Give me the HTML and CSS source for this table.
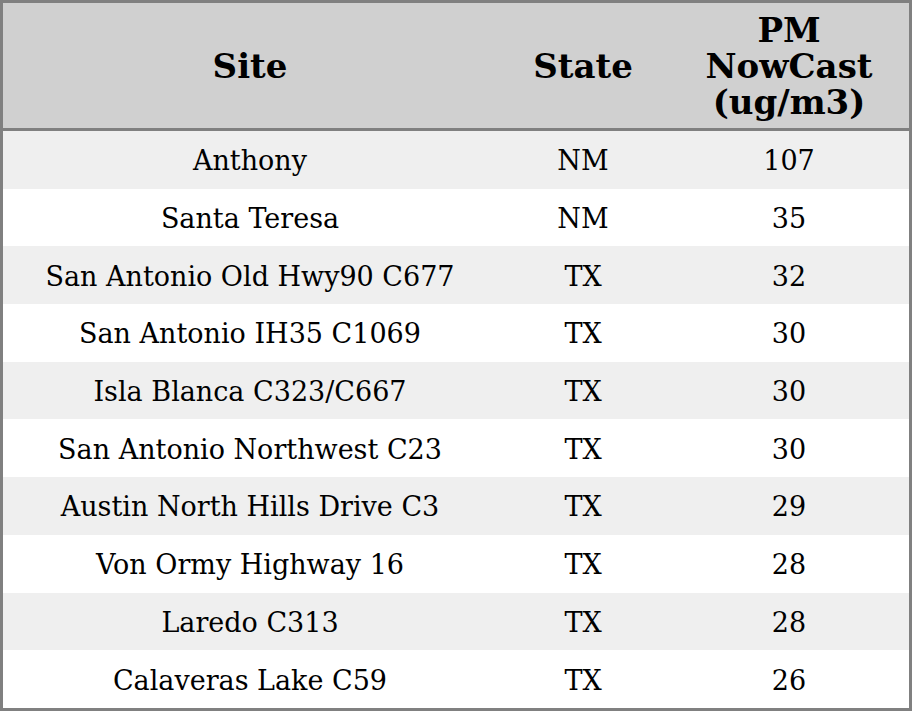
FILE: index.html
```html
<!DOCTYPE html>
<html>
<head>
<meta charset="utf-8">
<link rel="stylesheet" href="styles.css">
</head>
<body>
<table class="aq">
  <thead>
    <tr>
      <th class="c-site">Site</th>
      <th class="c-state">State</th>
      <th class="c-pm">PM<br>NowCast<br>(ug/m3)</th>
    </tr>
  </thead>
  <tbody>
    <tr><td>Anthony</td><td>NM</td><td>107</td></tr>
    <tr><td>Santa Teresa</td><td>NM</td><td>35</td></tr>
    <tr><td>San Antonio Old Hwy90 C677</td><td>TX</td><td>32</td></tr>
    <tr><td>San Antonio IH35 C1069</td><td>TX</td><td>30</td></tr>
    <tr><td>Isla Blanca C323/C667</td><td>TX</td><td>30</td></tr>
    <tr><td>San Antonio Northwest C23</td><td>TX</td><td>30</td></tr>
    <tr><td>Austin North Hills Drive C3</td><td>TX</td><td>29</td></tr>
    <tr><td>Von Ormy Highway 16</td><td>TX</td><td>28</td></tr>
    <tr><td>Laredo C313</td><td>TX</td><td>28</td></tr>
    <tr><td>Calaveras Lake C59</td><td>TX</td><td>26</td></tr>
  </tbody>
</table>
</body>
</html>
```

FILE: styles.css
```css
html, body {
  margin: 0;
  padding: 0;
  background: #ffffff;
}

.aq {
  width: 912px;
  border-collapse: collapse;
  border: 3px solid #808080;
  font-family: "DejaVu Serif", serif;
  color: #000000;
  table-layout: fixed;
}

.aq th,
.aq td {
  padding: 0;
  text-align: center;
  vertical-align: middle;
}

.aq thead tr {
  background: #d0d0d0;
  border-bottom: 3px solid #808080;
}

.aq th {
  height: 125px;
  font-size: 34px;
  font-weight: bold;
  line-height: 36px;
}

.c-site { width: 494px; }
.c-state { width: 172px; }
.c-pm { width: 240px; }

.aq td {
  height: 55.7px;
  padding-top: 2px;
  font-size: 27px;
}

.aq tbody tr:nth-child(odd) {
  background: #efefef;
}

.aq tbody tr:nth-child(even) {
  background: #ffffff;
}
```
